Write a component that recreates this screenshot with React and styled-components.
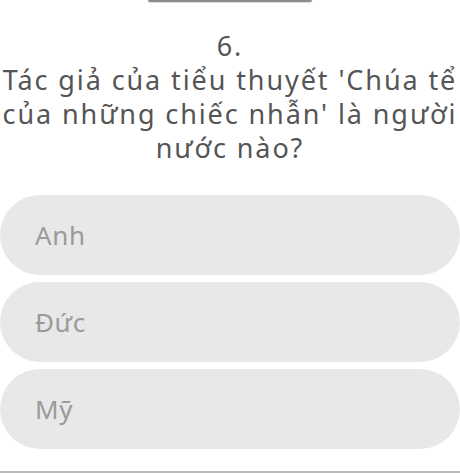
import React from 'react';
import styled, { createGlobalStyle } from 'styled-components';

const GlobalStyle = createGlobalStyle`
  html, body {
    margin: 0;
    padding: 0;
    background: #ffffff;
  }
`;

const Page = styled.div`
  width: 460px;
  height: 474px;
  display: flex;
  flex-direction: column;
  align-items: center;
  overflow: hidden;
  font-family: "Noto Sans", sans-serif;
`;

const Handle = styled.div`
  width: 164px;
  height: 2px;
  background: #8c8c8c;
  border-radius: 0 0 3px 3px;
  box-shadow: 0 1px 1px rgba(0, 0, 0, 0.15);
`;

const Question = styled.div`
  margin-top: 27px;
  width: 460px;
  text-align: center;
  color: #555555;
  font-size: 27px;
  line-height: 34px;
  letter-spacing: 1.9px;
  white-space: nowrap;
`;

const Line = styled.div``;

const Options = styled.div`
  margin-top: 30px;
  width: 460px;
  display: flex;
  flex-direction: column;
  gap: 7px;
`;

const Option = styled.div`
  height: 80px;
  border-radius: 40px;
  background: #e8e8e8;
  display: flex;
  align-items: center;
  padding-left: 35px;
  color: #9a9a9a;
  font-size: 26px;
  letter-spacing: 0.6px;
`;

const BottomLine = styled.div`
  margin-top: auto;
  margin-bottom: 1px;
  width: 460px;
  height: 2px;
  background: #bdbdbd;
`;

const lines = [
  '6.',
  "Tác giả của tiểu thuyết 'Chúa tể",
  "của những chiếc nhẫn' là người",
  'nước nào?',
];

const answers = ['Anh', 'Đức', 'Mỹ'];

export default function App() {
  return (
    <Page>
      <GlobalStyle />
      <Handle />
      <Question>
        {lines.map((l) => (
          <Line key={l}>{l}</Line>
        ))}
      </Question>
      <Options>
        {answers.map((a) => (
          <Option key={a}>{a}</Option>
        ))}
      </Options>
      <BottomLine />
    </Page>
  );
}
